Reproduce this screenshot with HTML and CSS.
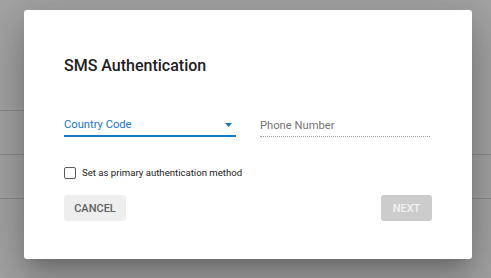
FILE: index.html
```html
<!DOCTYPE html>
<html>
<head>
<meta charset="utf-8">
<link rel="stylesheet" href="styles.css">
</head>
<body>
<div class="page">
  <div class="row row-first"><div class="rule-short"></div></div>
  <div class="row"></div>
  <div class="row"></div>
</div>
<div class="dialog">
  <h2 class="title">SMS Authentication</h2>
  <div class="fields">
    <div class="field field-select">
      <span class="field-label">Country Code</span>
      <svg class="caret" width="7" height="4" viewBox="0 0 7 4"><path d="M0 0H7L3.5 4Z" fill="#1976c2"/></svg>
    </div>
    <div class="field field-text">
      <span class="field-placeholder">Phone Number</span>
    </div>
  </div>
  <label class="check-row">
    <span class="checkbox"></span>
    <span class="check-label">Set as primary authentication method</span>
  </label>
  <div class="actions">
    <button class="btn btn-cancel">CANCEL</button>
    <button class="btn btn-next">NEXT</button>
  </div>
</div>
</body>
</html>
```
FILE: styles.css
```css
html, body {
  margin: 0;
  padding: 0;
}
body {
  width: 491px;
  height: 278px;
  background: #a3a3a3;
  font-family: Roboto, "Liberation Sans", sans-serif;
  overflow: hidden;
  position: relative;
}
.page {
  display: flex;
  flex-direction: column;
}
.row {
  height: 43px;
  border-bottom: 1px solid #8a8a8a;
}
.row-first {
  height: 111px;
  border-bottom: none;
  display: flex;
  align-items: flex-end;
}
.rule-short {
  width: 60px;
  height: 1px;
  background: #8a8a8a;
}
.dialog {
  position: absolute;
  left: 24px;
  top: 10px;
  width: 448px;
  height: 249px;
  box-sizing: border-box;
  padding: 44px 40px 38px;
  background: #fff;
  border-radius: 3px;
  box-shadow: 0 11px 15px -7px rgba(0,0,0,.2), 0 24px 38px 3px rgba(0,0,0,.14), 0 9px 46px 8px rgba(0,0,0,.12);
  display: flex;
  flex-direction: column;
}
.title {
  margin: 0;
  font-size: 16px;
  line-height: 24px;
  font-weight: 500;
  color: #212121;
}
.fields {
  margin-top: 39px;
  display: grid;
  grid-template-columns: 172px 170px;
  column-gap: 24px;
}
.field {
  display: flex;
  align-items: center;
  justify-content: space-between;
  font-size: 11.2px;
  line-height: 16px;
  padding-bottom: 2px;
}
.field-select {
  color: #1976c2;
  border-bottom: 2px solid #1976c2;
}
.caret {
  margin-right: 4px;
  margin-top: 0;
}
.field-text {
  color: #757575;
  border-bottom: 1px dotted #9a9a9a;
  padding-bottom: 2px;
  height: 17px;
}
.check-row {
  margin-top: 30px;
  display: flex;
  align-items: center;
  gap: 6px;
  height: 12px;
}
.checkbox {
  width: 12px;
  height: 12px;
  box-sizing: border-box;
  border: 1px solid #5a5a5a;
  border-radius: 2px;
}
.check-label {
  font-size: 9.6px;
  line-height: 12px;
  color: #212121;
}
.actions {
  margin-top: 16px;
  display: flex;
  justify-content: space-between;
}
.btn {
  height: 26px;
  border: none;
  border-radius: 3px;
  font-family: Roboto, "Liberation Sans", sans-serif;
  font-size: 11px;
  font-weight: 500;
  padding: 0;
  cursor: pointer;
}
.btn-cancel {
  width: 62px;
  background: #eeeeee;
  color: #616161;
}
.btn-next {
  width: 51px;
  background: #cccccc;
  color: #f2f2f2;
}
```
